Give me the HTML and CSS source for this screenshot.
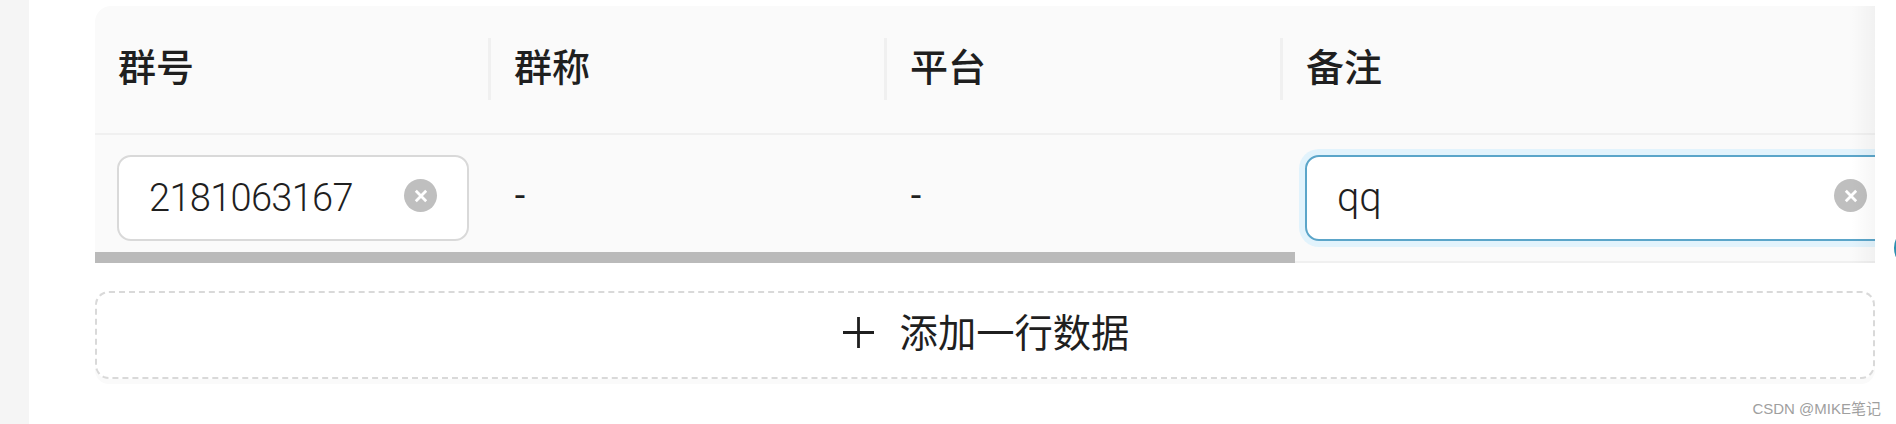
FILE: index.html
```html
<!DOCTYPE html>
<html lang="zh-CN">
<head>
<meta charset="utf-8">
<title>表格</title>
<link rel="stylesheet" href="styles.css">
</head>
<body>
<div class="page">
  <aside class="rail"></aside>
  <main class="content">
    <section class="table">
      <div class="table-row head">
        <div class="th">群号</div>
        <div class="th">群称</div>
        <div class="th">平台</div>
        <div class="th last">备注</div>
      </div>
      <div class="table-row body">
        <div class="td">
          <div class="input short"><span class="val">2181063167</span><i class="clear"><svg viewBox="0 0 12 12"><path d="M3.4 3.4 8.6 8.6M8.6 3.4 3.4 8.6"/></svg></i></div>
        </div>
        <div class="td dash">-</div>
        <div class="td dash">-</div>
        <div class="td last">
          <div class="input focus"><span class="val letters">qq</span><i class="clear"><svg viewBox="0 0 12 12"><path d="M3.4 3.4 8.6 8.6M8.6 3.4 3.4 8.6"/></svg></i></div>
        </div>
      </div>
      <div class="scroll"><div class="thumb"></div></div>
      <div class="edge-shadow"></div>
    </section>
    <button class="add"><svg class="plus" viewBox="0 0 31 31"><path d="M15.5 0V31M0 15.5H31"/></svg><span class="add-label">添加一行数据</span></button>
  </main>
</div>
<div class="float"></div>
<div class="mark">CSDN @MIKE笔记</div>
</body>
</html>
```
FILE: styles.css
```css
html, body { margin: 0; padding: 0; width: 1896px; height: 424px; overflow: hidden; background: #fff; }
body { font-family: "Noto Sans", "Noto Sans CJK SC", sans-serif; color: #1f1f1f; position: relative; }
.page { display: flex; height: 424px; }
.rail { width: 29px; background: #f5f5f5; }
.content { width: 1780px; margin-left: 66px; padding-top: 6px; }
.table { position: relative; width: 1780px; height: 257px; overflow: hidden; background: #fafafa; border-radius: 16px 0 0 0; }
.table-row { display: grid; grid-template-columns: 396px 396px 396px 592px; }
.head { height: 127px; border-bottom: 2px solid #f0f0f0; }
.th { position: relative; padding-left: 23px; font-size: 38px; font-weight: 500; line-height: 120px; }
.th:not(.last)::after { content: ""; position: absolute; right: 0; top: 32px; width: 3px; height: 62px; background: #f0f0f0; }
.body { height: 128px; }
.td { padding: 20px 0 0 22px; font-size: 37px; }
.dash { padding-left: 23px; line-height: 74px; }
.input { box-sizing: border-box; height: 86px; display: flex; align-items: center; justify-content: space-between; background: #fff; border: 2px solid #d9d9d9; border-radius: 14px; padding: 0 33px 0 30px; }
.input.short { width: 352px; padding-right: 30px; }
.input.focus { width: 597px; border-color: #5ba5c9; box-shadow: 0 0 0 6px #e2f3fc; }
.val { font-family: Roboto, sans-serif; font-size: 38px; font-weight: 300; letter-spacing: -0.7px; line-height: 80px; }
.val.letters { font-size: 40px; letter-spacing: 0; }
.clear { width: 33px; height: 33px; margin-bottom: 5px; border-radius: 50%; background: #bfbfbf; display: flex; align-items: center; justify-content: center; }
.clear svg { width: 24px; height: 24px; }
.clear path { stroke: #fff; stroke-width: 1.4; fill: none; }
.scroll { position: absolute; left: 0; right: 0; bottom: 0; height: 11px; }
.scroll::after { content: ""; position: absolute; left: 0; right: 0; bottom: 0; height: 2px; background: #f0f0f0; }
.thumb { position: relative; z-index: 1; width: 1200px; height: 11px; background: #bababa; }
.edge-shadow { position: absolute; top: 0; right: 0; bottom: 0; width: 24px; background: linear-gradient(to right, rgba(0,0,0,0), rgba(0,0,0,.035)); }
.add { box-sizing: border-box; display: flex; align-items: center; justify-content: center; width: 1780px; height: 88px; margin-top: 28px; background: #fff; border: 2px dashed #d9d9d9; border-radius: 14px; box-shadow: 0 5px 0 #fafafa; font-family: inherit; color: #1f1f1f; font-size: 38.3px; padding: 0 0 6px 2px; }
.add-label { margin-bottom: 4px; }
.plus { width: 31px; height: 31px; margin-right: 26px; }
.plus path { stroke: #1f1f1f; stroke-width: 2.8; fill: none; }
.float { position: absolute; left: 1894px; top: 226px; width: 38px; height: 38px; border: 3px solid #2c8fb0; border-radius: 50%; }
.mark { position: absolute; right: 15px; top: 400px; font-size: 15px; line-height: 17px; color: #9f9f9f; font-family: "Liberation Sans", "Noto Sans CJK SC", sans-serif; }
```
